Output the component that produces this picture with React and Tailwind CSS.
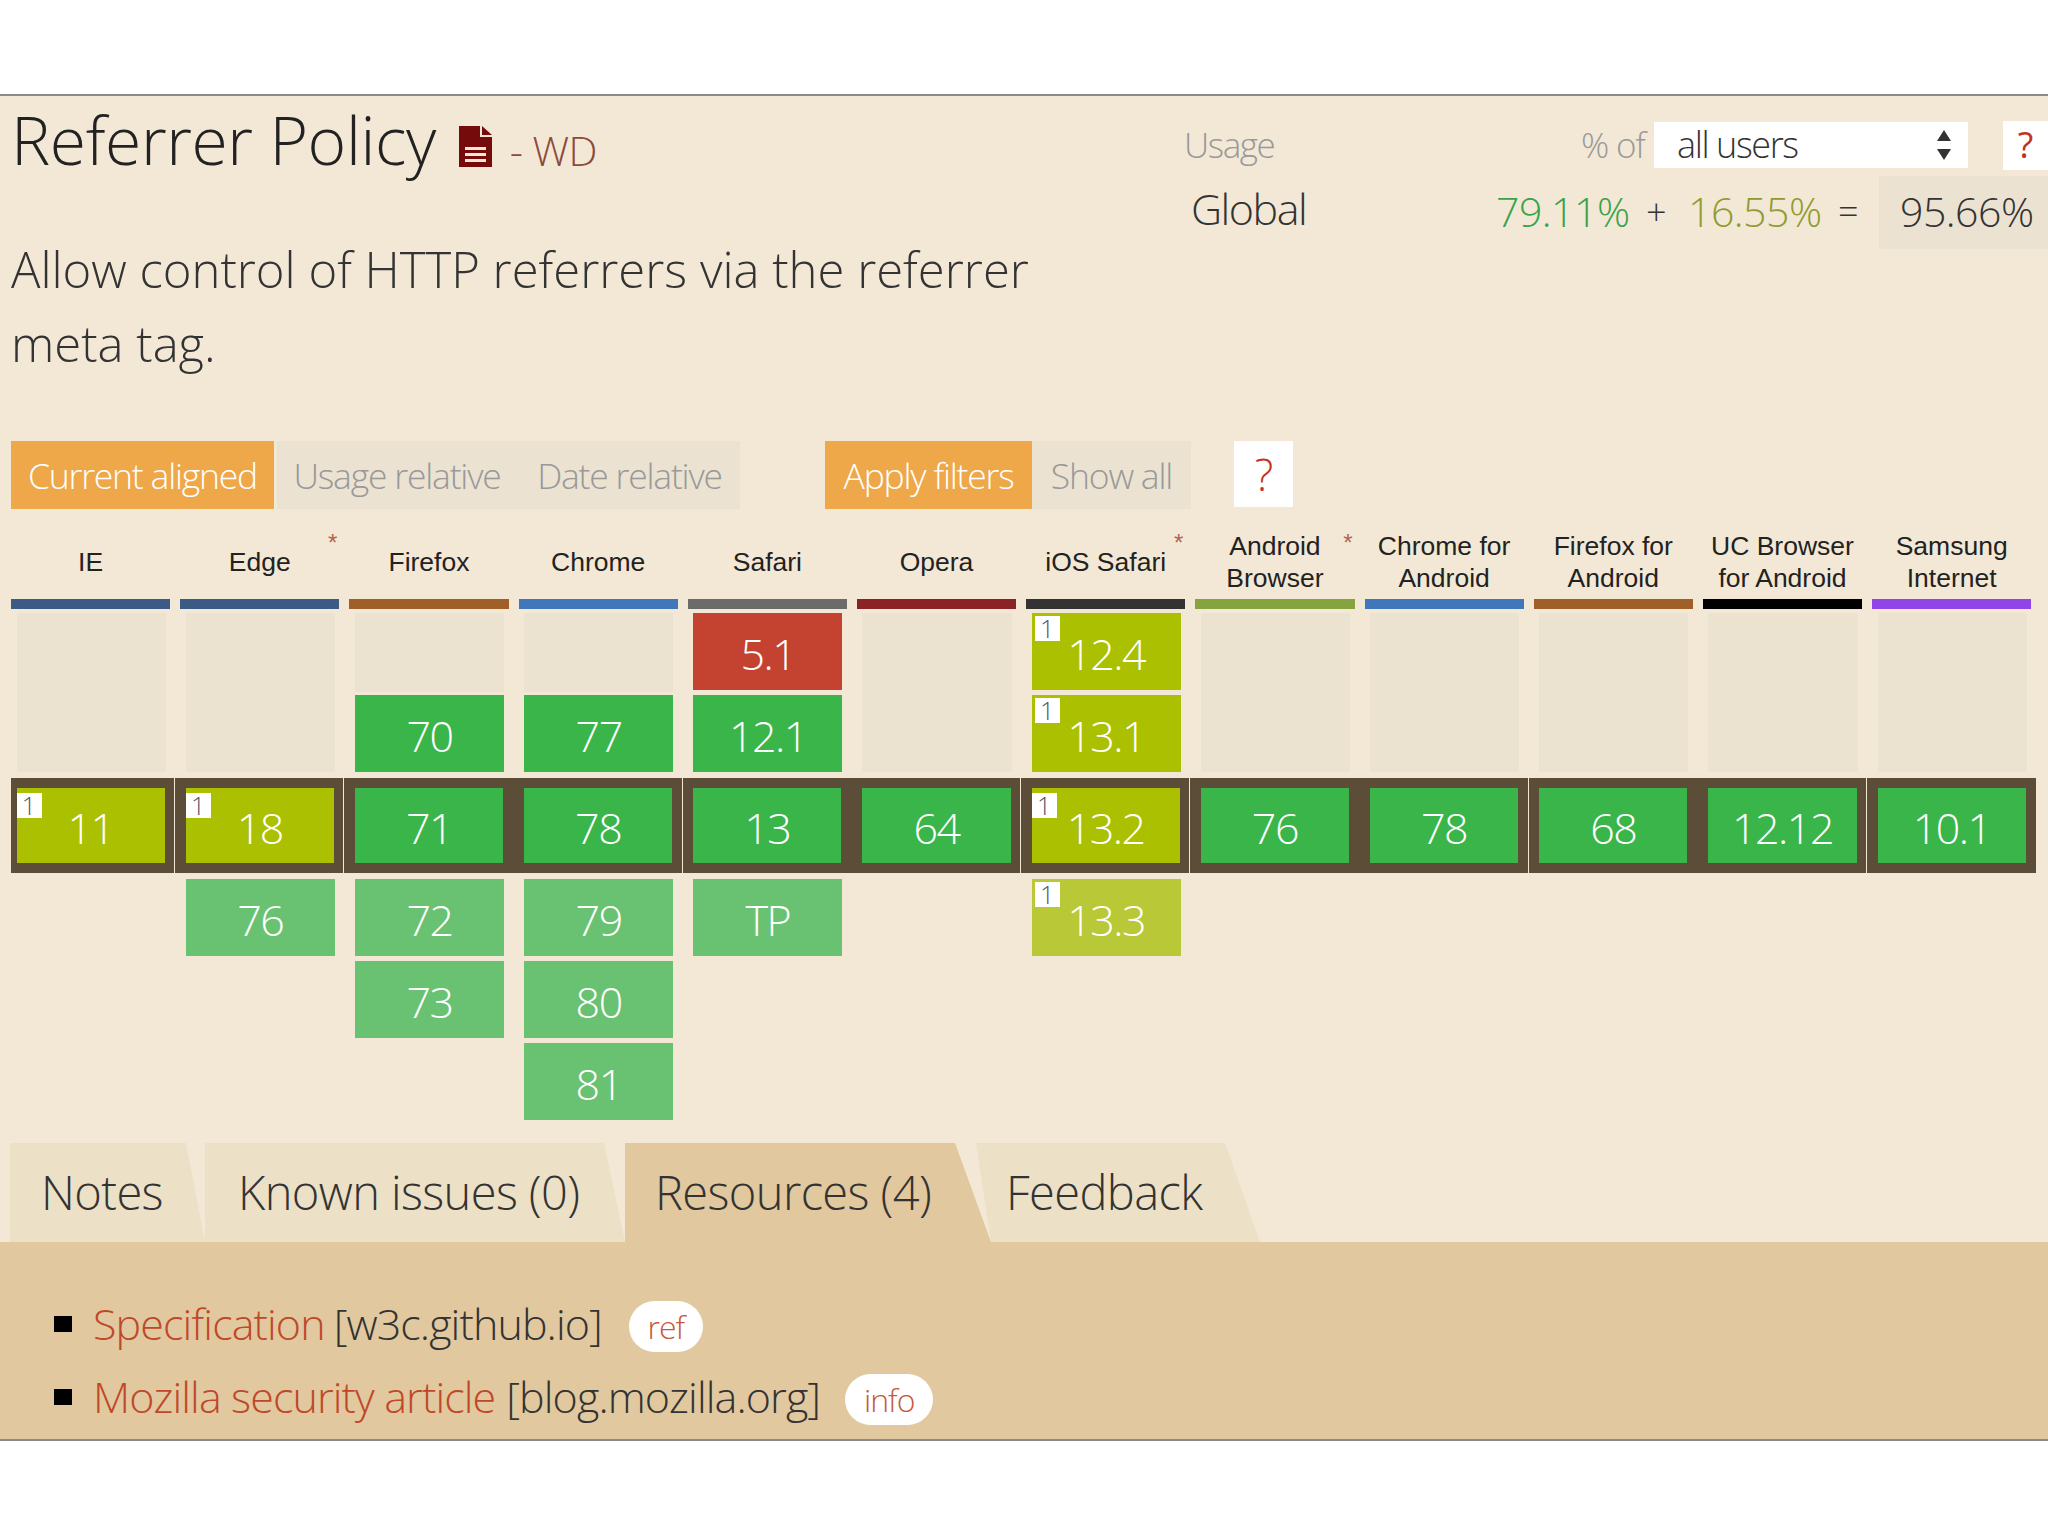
const COLUMNS = [
  { name: ['IE'], bar: 'bg-[#3b5a86]', past: [null], current: { v: '11', kind: 'partial' }, future: [], divider: true },
  { name: ['Edge'], star: true, bar: 'bg-[#3b5a86]', past: [null], current: { v: '18', kind: 'partial' }, future: [{ v: '76', kind: 'yes' }], divider: true },
  { name: ['Firefox'], bar: 'bg-[#a05f28]', past: ['empty', { v: '70', kind: 'yes' }], current: { v: '71', kind: 'yes' }, future: [{ v: '72', kind: 'yes' }, { v: '73', kind: 'yes' }] },
  { name: ['Chrome'], bar: 'bg-[#4077bb]', past: ['empty', { v: '77', kind: 'yes' }], current: { v: '78', kind: 'yes' }, future: [{ v: '79', kind: 'yes' }, { v: '80', kind: 'yes' }, { v: '81', kind: 'yes' }], divider: true },
  { name: ['Safari'], bar: 'bg-[#6b6b6b]', past: [{ v: '5.1', kind: 'no' }, { v: '12.1', kind: 'yes' }], current: { v: '13', kind: 'yes' }, future: [{ v: 'TP', kind: 'yes' }] },
  { name: ['Opera'], bar: 'bg-[#8b2226]', past: [null], current: { v: '64', kind: 'yes' }, future: [], divider: true },
  { name: ['iOS Safari'], star: true, bar: 'bg-[#333333]', past: [{ v: '12.4', kind: 'partial' }, { v: '13.1', kind: 'partial' }], current: { v: '13.2', kind: 'partial' }, future: [{ v: '13.3', kind: 'partial' }], divider: true },
  { name: ['Android', 'Browser'], star: true, bar: 'bg-[#85a33f]', past: [null], current: { v: '76', kind: 'yes' }, future: [] },
  { name: ['Chrome for', 'Android'], bar: 'bg-[#4077bb]', past: [null], current: { v: '78', kind: 'yes' }, future: [], divider: true },
  { name: ['Firefox for', 'Android'], bar: 'bg-[#a05f28]', past: [null], current: { v: '68', kind: 'yes' }, future: [] },
  { name: ['UC Browser', 'for Android'], bar: 'bg-black', past: [null], current: { v: '12.12', kind: 'yes' }, future: [], divider: true },
  { name: ['Samsung', 'Internet'], bar: 'bg-[#8f45e8]', past: [null], current: { v: '10.1', kind: 'yes' }, future: [] },
]

const NOW = { yes: 'bg-[#39b54a]', partial: 'bg-[#abc000]', no: 'bg-[#c44230]' }
const FUTURE = { yes: 'bg-[#69c271]', partial: 'bg-[#b8c836]', no: 'bg-[#c44230]' }

function Cell({ cell, colors, height, badge = 'left-[3px] top-[3px]' }) {
  return (
    <div className={`relative ml-[10.5px] mr-[9.5px] flex items-center justify-center pt-[3px] text-[43px] font-light leading-none tracking-[-1.5px] text-white ${height} ${colors[cell.kind]}`}>
      {cell.kind === 'partial' && (
        <span className={`absolute flex h-[25px] w-[25px] items-center justify-center bg-white text-[25px] font-light tracking-normal text-[#556] ${badge}`}>1</span>
      )}
      {cell.v}
    </div>
  )
}

function Column({ col, first }) {
  return (
    <div className="flex flex-col">
      <div className="relative flex h-[74px] flex-col items-center justify-center font-['Liberation_Sans',Arial,sans-serif] text-[26.5px] leading-[32px] text-[#222]">
        {col.name.map((line) => <span key={line}>{line}</span>)}
        {col.star && <span className="absolute right-[7px] top-[6px] text-[24px] leading-none text-[#b5634f]">*</span>}
      </div>
      <div className={`mx-[5px] h-[10px] ${col.bar}`} />

      <div className="mt-[4px] flex h-[159px] flex-col">
        {col.past[0] === null && <div className="ml-[10.5px] mr-[9.5px] h-[159px] bg-[#ebe2cf]" />}
        {col.past[0] === 'empty' && <div className="mb-[3px] ml-[10.5px] mr-[9.5px] h-[79px] bg-[#ebe2cf]" />}
        {col.past.filter((c) => c && c !== 'empty').map((c, i) => (
          <div key={c.v} className={col.past[0] !== 'empty' && i === 0 ? 'mb-[5px]' : ''}>
            <Cell cell={c} colors={NOW} height="h-[77px]" />
          </div>
        ))}
      </div>

      <div className={`mt-[6px] border-r bg-[#5b4d38] py-[10px] ${col.divider ? 'border-[#f2e8d5]' : 'border-[#5b4d38]'} ${first ? 'ml-[5px]' : ''}`}>
        <div className={first ? '-ml-[5px]' : ''}>
          <Cell cell={col.current} colors={NOW} height="h-[75px]" badge="left-0 top-[5px]" />
        </div>
      </div>

      <div className="mt-[6px] flex flex-col gap-[5px]">
        {col.future.map((c) => <Cell key={c.v} cell={c} colors={FUTURE} height="h-[77px]" />)}
      </div>
    </div>
  )
}

function DocIcon() {
  return (
    <svg width="33" height="41" viewBox="0 0 33 41" className="ml-[23px] mr-[18px] mt-[14px] self-center">
      <path d="M0 0H21V11H33V41H0Z" fill="#750b0b" />
      <path d="M23 0L33 9H23Z" fill="#750b0b" />
      <path d="M6 21H27V24H6ZM6 27H27V30H6ZM6 33H27V36H6Z" fill="#f2e8d5" />
    </svg>
  )
}

export default function App() {
  return (
    <div className="min-h-screen bg-white font-['Open_Sans',sans-serif]">
      <div className="h-[94px]" />
      <div className="border-y-2 border-[#8a8a84] bg-[#f2e8d5]">

        {/* Header */}
        <div className="flex h-[345px]">
          <div className="w-[1184px] pl-[11px]">
            <div className="flex h-[86px] items-center">
              <h1 className="text-[66px] font-light leading-none tracking-[-0.4px] text-[#222]">Referrer Policy</h1>
              <DocIcon />
              <span className="mt-[22px] text-[41px] font-light leading-none tracking-[-0.6px] text-[#8c4a3a]">- WD</span>
            </div>
            <p className="mt-[50px] w-[1040px] text-[49px] font-light leading-[74px] text-[#333]">
              Allow control of HTTP referrers via the referrer meta tag.
            </p>
          </div>
          <div className="flex-1">
            <div className="mt-[25px] flex h-[48px] items-center">
              <span className="w-[397px] text-[35px] font-light tracking-[-1.4px] text-[#999]">Usage</span>
              <span className="w-[73px] text-[35px] font-light tracking-[-1.2px] text-[#999]">% of</span>
              <div className="flex h-[46px] w-[314px] items-center justify-between bg-white pl-[23px] pr-[16px] text-[36px] font-light tracking-[-1.4px] text-[#333]">
                all users
                <svg width="16" height="30" viewBox="0 0 16 30">
                  <path d="M8 0L15 11H1ZM8 30L1 19H15Z" fill="#333" />
                </svg>
              </div>
              <div className="ml-[35px] flex h-[49px] w-[45px] items-center justify-center bg-white text-[36px] leading-none text-[#c0341d]">?</div>
            </div>
            <div className="mt-[4px] flex h-[73px] items-center pt-[5px]">
              <span className="ml-[7px] w-[305px] pb-[5px] text-[43px] font-light tracking-[-1.5px] text-[#333]">Global</span>
              <span className="w-[150px] text-[41px] font-light tracking-[-0.5px] text-[#39a34a]">79.11%</span>
              <span className="w-[42px] text-[36px] font-light text-[#333]">+</span>
              <span className="w-[150px] text-[41px] font-light tracking-[-0.5px] text-[#8f9c32]">16.55%</span>
              <span className="w-[41px] text-[36px] font-light text-[#333]">=</span>
              <span className="flex h-[73px] w-[169px] items-center bg-[#ebe2d2] pl-[21px] text-[41px] font-light tracking-[-0.5px] text-[#333]">95.66%</span>
            </div>
          </div>
        </div>

        {/* Filter buttons */}
        <div className="flex h-[68px] items-stretch pl-[11px] text-[35.5px] font-light leading-none tracking-[-1.2px]">
          <div className="flex w-[263px] items-center justify-center bg-[#eea849] pt-[1px] text-white">Current aligned</div>
          <div className="ml-[3px] flex w-[240px] items-center justify-center bg-[#ebe2d2] pt-[1px] text-[#999]">Usage relative</div>
          <div className="flex w-[223px] items-center justify-center bg-[#ebe2d2] pl-[2px] pt-[1px] text-[#999]">Date relative</div>
          <div className="ml-[85px] flex w-[207px] items-center justify-center bg-[#eea849] pt-[1px] text-white">Apply filters</div>
          <div className="flex w-[159px] items-center justify-center bg-[#ebe2d2] pt-[1px] text-[#999]">Show all</div>
          <div className="ml-[43px] mb-[2px] flex w-[59px] items-center justify-center bg-white text-[44px] text-[#c0341d]">?</div>
        </div>

        {/* Support table */}
        <div className="mt-[16px] grid grid-cols-[repeat(12,169.2px)] pl-[6px]">
          {COLUMNS.map((col, i) => <Column key={col.name.join(' ')} col={col} first={i === 0} />)}
        </div>

        {/* Tabs */}
        <div className="mt-[23px] flex h-[99px] pl-[10px] text-[47px] font-light leading-none tracking-[-0.6px] text-[#333]">
          <div className="flex w-[195px] items-center bg-[#ece0c6] pl-[31px] [clip-path:polygon(0_0,176px_0,100%_100%,0_100%)]">Notes</div>
          <div className="flex w-[420px] items-center bg-[#ece0c6] pl-[33px] [clip-path:polygon(0_0,399px_0,100%_100%,0_100%)]">Known issues (0)</div>
          <div className="flex w-[366px] items-center bg-[#e1c89e] pl-[30px] [clip-path:polygon(0_0,330px_0,100%_100%,0_100%)]">Resources (4)</div>
          <div className="-ml-[15px] flex w-[284px] items-center bg-[#ece0c6] pl-[30px] [clip-path:polygon(0_0,249px_0,100%_100%,15px_100%)]">Feedback</div>
        </div>

        {/* Resources */}
        <div className="flex h-[197px] flex-col gap-[16px] bg-[#e1c89e] pt-[56px] text-[43px] font-light leading-[51px] tracking-[-0.9px] text-[#333]">
          <div className="flex items-center pl-[54px]">
            <span className="mb-[6px] mr-[21px] h-[16px] w-[18px] bg-black" />
            <span className="mb-[6px] text-[#c0482a]">Specification</span>
            <span className="mb-[6px] ml-[9px]">[w3c.github.io]</span>
            <span className="ml-[27px] flex h-[51px] w-[74px] items-center justify-center rounded-full bg-white text-[32px] font-light tracking-[-1px] text-[#c8583c]">ref</span>
          </div>
          <div className="flex items-center pl-[54px]">
            <span className="mb-[6px] mr-[21px] h-[16px] w-[18px] bg-black" />
            <span className="mb-[6px] text-[#c0482a]">Mozilla security article</span>
            <span className="mb-[6px] ml-[11px]">[blog.mozilla.org]</span>
            <span className="ml-[25px] flex h-[51px] w-[88px] items-center justify-center rounded-full bg-white text-[32px] font-light tracking-[-1px] text-[#c8583c]">info</span>
          </div>
        </div>
      </div>
    </div>
  )
}
